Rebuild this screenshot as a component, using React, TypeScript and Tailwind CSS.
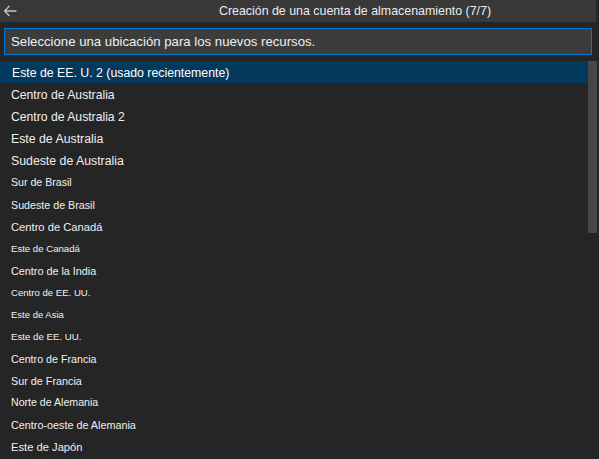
import React from 'react';

interface Region {
  name: string;
  size: string;
}

const REGIONS: Region[] = [
  { name: 'Centro de Australia', size: 'text-[12.2px]' },
  { name: 'Centro de Australia 2', size: 'text-[12.2px]' },
  { name: 'Este de Australia', size: 'text-[12.3px]' },
  { name: 'Sudeste de Australia', size: 'text-[12.3px]' },
  { name: 'Sur de Brasil', size: 'text-[10.6px]' },
  { name: 'Sudeste de Brasil', size: 'text-[10.7px]' },
  { name: 'Centro de Canadá', size: 'text-[11.2px]' },
  { name: 'Este de Canadá', size: 'text-[9.6px]' },
  { name: 'Centro de la India', size: 'text-[10.8px]' },
  { name: 'Centro de EE. UU.', size: 'text-[9.6px]' },
  { name: 'Este de Asia', size: 'text-[9.5px]' },
  { name: 'Este de EE. UU.', size: 'text-[9.7px]' },
  { name: 'Centro de Francia', size: 'text-[10.7px]' },
  { name: 'Sur de Francia', size: 'text-[10.8px]' },
  { name: 'Norte de Alemania', size: 'text-[10.6px]' },
  { name: 'Centro-oeste de Alemania', size: 'text-[10.8px]' },
  { name: 'Este de Japón', size: 'text-[11.2px]' },
];

function BackArrow() {
  return (
    <svg width="14" height="12" viewBox="0 0 14 12" fill="none" stroke="#c5c5c5" strokeWidth="1.3">
      <path d="M13.5 6H1.5M6.5 1L1.5 6l5 5" />
    </svg>
  );
}

export default function App() {
  return (
    <div className="w-[599px] h-[459px] overflow-hidden bg-[#252526] text-[#f0f0f0] font-['Liberation_Sans',Arial,sans-serif] flex flex-col">
      {/* Title bar */}
      <div className="h-[22px] bg-[#383838] flex items-center shrink-0 mr-[3px]">
        <div className="w-[26px] pl-[3px] flex items-center">
          <BackArrow />
        </div>
        <div className="flex-1 text-center text-[12.4px] text-[#ececec] pl-[88px]">
          Creación de una cuenta de almacenamiento (7/7)
        </div>
      </div>

      {/* Input */}
      <div className="pt-[6px] pl-[4px] pr-[7px] shrink-0">
        <div className="h-[27px] border border-[#0078d4] bg-[#3c3c3c] flex items-center pl-[6px] text-[13.2px] text-[#f0f0f0]">
          Seleccione una ubicación para los nuevos recursos.
        </div>
      </div>

      {/* List */}
      <div className="relative mt-[6px] flex-1">
        <div className="h-[22px] bg-[#04395e] flex items-center pl-[12px] pt-[2px] text-[12.3px] text-white mr-[11px]">
          Este de EE. U. 2 (usado recientemente)
        </div>
        {REGIONS.map((r) => (
          <div key={r.name} className={`h-[22px] flex items-center pl-[11px] pt-[2px] text-[#f0f0f0] ${r.size}`}>
            {r.name}
          </div>
        ))}
        {/* Scrollbar */}
        <div className="absolute top-0 left-[588px] w-[9px] h-[172px] bg-[#4f4f4f]/80" />
      </div>
    </div>
  );
}
